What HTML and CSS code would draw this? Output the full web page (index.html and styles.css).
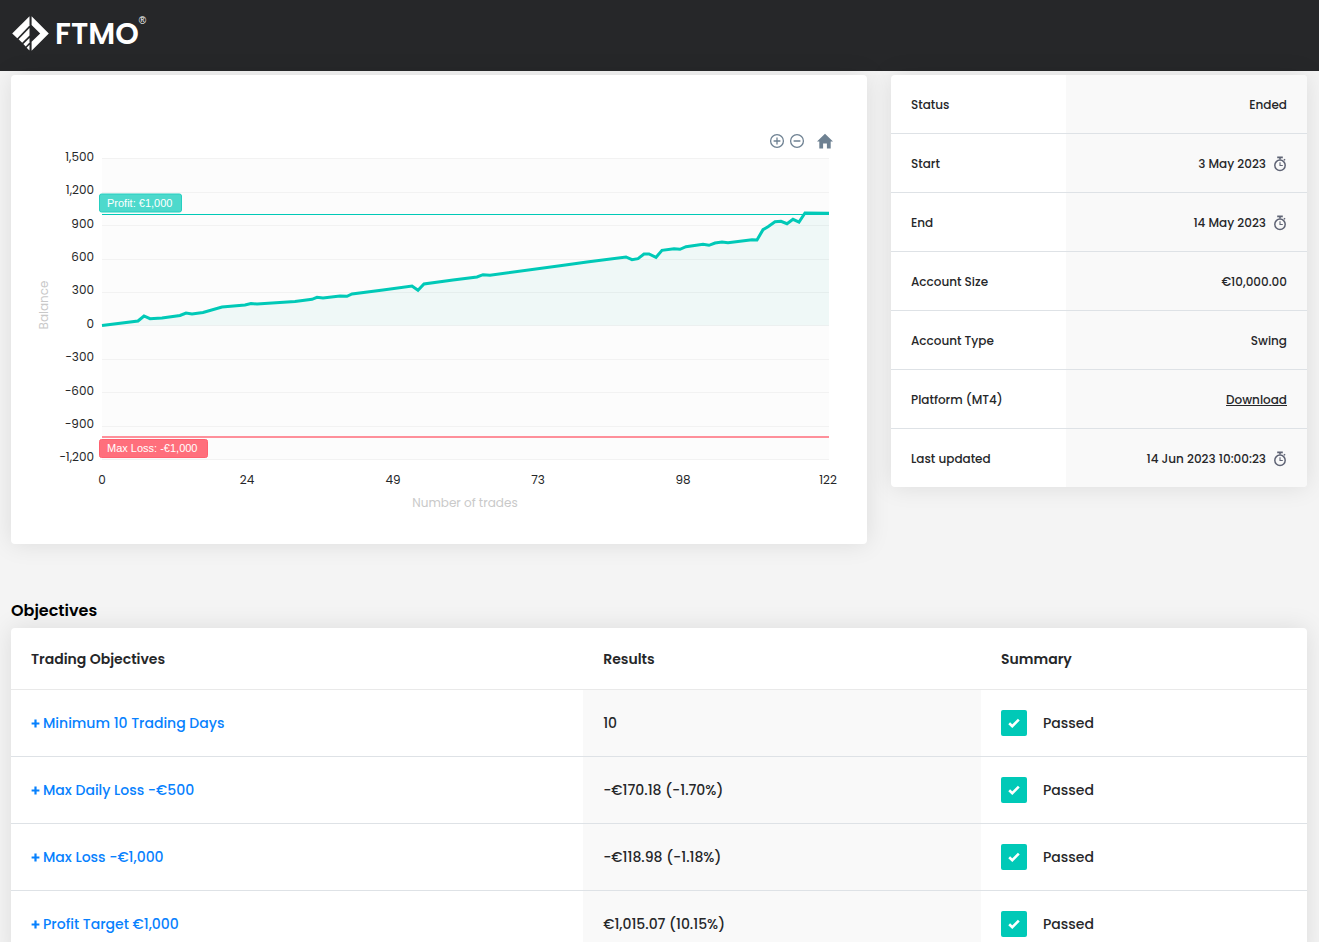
FILE: index.html
```html
<!DOCTYPE html>
<html lang="en">
<head>
<meta charset="utf-8">
<meta name="viewport" content="width=device-width, initial-scale=1">
<title>FTMO – Account overview</title>
<link rel="stylesheet" href="styles.css">
</head>
<body>
<svg class="defs" aria-hidden="true">
  <symbol id="stopwatch" viewBox="0 0 14 16">
    <path d="M4.2 1.4h5.6M7 1.5v2M11 4.3l1-1" fill="none" stroke="currentColor" stroke-width="1.6"/>
    <circle cx="7" cy="9.300" r="5.2" fill="none" stroke="currentColor" stroke-width="1.5"/>
    <path d="M7 6.200V9.500h2.8" fill="none" stroke="currentColor" stroke-width="1.1"/>
  </symbol>
  <symbol id="plus" viewBox="0 0 9 9">
    <path d="M4.5 .6v7.8M.6 4.5h7.8" stroke="currentColor" stroke-width="2.2" fill="none"/>
  </symbol>
  <symbol id="check" viewBox="0 0 12 10">
    <path d="M1.2 5.2L4.3 8.2L10.8 1.7" fill="none" stroke="currentColor" stroke-width="2.6"/>
  </symbol>
</svg>

<header class="topbar">
  <a class="logo" href="#" aria-label="FTMO">
    <svg class="logo-mark" viewBox="0 0 37 36" aria-hidden="true">
      <g fill="#fff">
        <path d="M17.5.2V9.6L5.3 22.2L.2 17.4z"/>
        <path d="M17.5 12V19.5L10.2 26.8L6.6 23.3z"/>
        <path d="M17.5 22V26.4L13.7 30.4L11.4 28.1z"/>
        <path d="M17.5 28.8V34.6L14.6 31.7z"/>
        <path d="M19.6 .2L36.8 17.4L19.6 34.8V25.8L28.2 17.4L19.6 9.100z"/>
      </g>
    </svg>
    <span class="logo-name">FTMO</span><span class="logo-reg">®</span>
  </a>
</header>

<main class="page">
  <div class="overview">
    <section class="card chart-card" aria-label="Balance chart">
      <div class="toolbar">
        <button type="button" class="tool" aria-label="Zoom in">
          <svg viewBox="0 0 16 16"><circle cx="8" cy="8" r="6.4"/><path d="M8 4.6v6.8M4.6 8h6.8"/></svg>
        </button>
        <button type="button" class="tool" aria-label="Zoom out">
          <svg viewBox="0 0 16 16"><circle cx="8" cy="8" r="6.4"/><path d="M4.6 8h6.8"/></svg>
        </button>
        <button type="button" class="tool tool-home" aria-label="Reset zoom">
          <svg viewBox="0 0 16 16"><path d="M8 .8L0 8.4h2.3V15.4h3.8V10.4h3.8v5h3.8V8.4H16L8 .8z"/></svg>
        </button>
      </div>
      <svg class="chart" viewBox="11 151 856 393" role="img" aria-label="Balance by number of trades">
        <rect class="plot" x="102" y="158" width="727" height="302"/>
        <path class="grid" d="M102 158.5H829M102 192.5H829M102 225.5H829M102 259.5H829M102 292.5H829M102 325.5H829M102 359.5H829M102 392.5H829M102 426.5H829M102 459.5H829"/>
        <path class="area" d="M102 325.5L138 321L144 316L150 318.700L162 318L180 315.500L186 313L192 314L203 312.500L222 307L245 305L251 303.500L257 304L295 301.500L312 299.300L317 297.300L323 298L340 296L347 296.300L352 294L383 290L412 286L418 290.300L424 284L453 280L477 277L483 274.700L490 275.300L560 265.700L587 262L626 257L632 259.700L638 258.700L644 254L649 254L656 257.300L662 250.300L674 248.700L680 249.300L686 246.700L703 244.300L709 245.300L715 243L722 242L728 242.700L752 239.700L757 240L763 229.700L768 226.700L775 221.700L781 221.300L787 223.700L793 219.300L799 222L805 213L829 213.300V325.500Z"/>
        <path class="target" d="M102 214.500H829"/>
        <path class="loss" d="M102 437H829"/>
        <path class="line" d="M102 325.500L138 321L144 316L150 318.700L162 318L180 315.500L186 313L192 314L203 312.500L222 307L245 305L251 303.500L257 304L295 301.500L312 299.300L317 297.300L323 298L340 296L347 296.300L352 294L383 290L412 286L418 290.300L424 284L453 280L477 277L483 274.700L490 275.300L560 265.700L587 262L626 257L632 259.700L638 258.700L644 254L649 254L656 257.300L662 250.300L674 248.700L680 249.300L686 246.700L703 244.300L709 245.300L715 243L722 242L728 242.700L752 239.700L757 240L763 229.700L768 226.700L775 221.700L781 221.300L787 223.700L793 219.300L799 222L805 213L829 213.300"/>
        <rect class="flag flag-target" x="99.500" y="194" width="82" height="18" rx="2"/>
        <text class="flag-text" x="107" y="207">Profit: €1,000</text>
        <rect class="flag flag-loss" x="99.500" y="439.500" width="108" height="18" rx="2"/>
        <text class="flag-text" x="107" y="452">Max Loss: -€1,000</text>
        <g class="axis axis-y">
          <text x="94" y="161">1,500</text>
          <text x="94" y="194">1,200</text>
          <text x="94" y="228">900</text>
          <text x="94" y="261">600</text>
          <text x="94" y="294">300</text>
          <text x="94" y="328">0</text>
          <text x="94" y="361">−300</text>
          <text x="94" y="395">−600</text>
          <text x="94" y="428">−900</text>
          <text x="94" y="461">−1,200</text>
        </g>
        <g class="axis axis-x">
          <text x="102" y="484">0</text>
          <text x="247" y="484">24</text>
          <text x="393" y="484">49</text>
          <text x="538" y="484">73</text>
          <text x="683" y="484">98</text>
          <text x="828" y="484">122</text>
        </g>
        <text class="axis-title" x="465" y="507">Number of trades</text>
        <text class="axis-title" transform="translate(48 305) rotate(-90)">Balance</text>
      </svg>
    </section>

    <section class="card info-card" aria-label="Account details">
      <table class="info">
        <tbody>
          <tr><th scope="row">Status</th><td>Ended</td></tr>
          <tr><th scope="row">Start</th><td><span class="stamp">3 May 2023<svg class="clock"><use href="#stopwatch"/></svg></span></td></tr>
          <tr><th scope="row">End</th><td><span class="stamp">14 May 2023<svg class="clock"><use href="#stopwatch"/></svg></span></td></tr>
          <tr><th scope="row">Account Size</th><td>€10,000.00</td></tr>
          <tr><th scope="row">Account Type</th><td>Swing</td></tr>
          <tr><th scope="row">Platform (MT4)</th><td><a class="download" href="#">Download</a></td></tr>
          <tr><th scope="row">Last updated</th><td><span class="stamp">14 Jun 2023 10:00:23<svg class="clock"><use href="#stopwatch"/></svg></span></td></tr>
        </tbody>
      </table>
    </section>
  </div>

  <h2 class="heading">Objectives</h2>
  <section class="card">
    <table class="objectives">
      <thead>
        <tr><th scope="col" class="col-name">Trading Objectives</th><th scope="col" class="col-result">Results</th><th scope="col">Summary</th></tr>
      </thead>
      <tbody>
        <tr>
          <td><a class="objective" href="#"><svg class="plus"><use href="#plus"/></svg>Minimum 10 Trading Days</a></td>
          <td class="result">10</td>
          <td><span class="status"><span class="badge"><svg class="check"><use href="#check"/></svg></span>Passed</span></td>
        </tr>
        <tr>
          <td><a class="objective" href="#"><svg class="plus"><use href="#plus"/></svg>Max Daily Loss −€500</a></td>
          <td class="result">−€170.18 (−1.70%)</td>
          <td><span class="status"><span class="badge"><svg class="check"><use href="#check"/></svg></span>Passed</span></td>
        </tr>
        <tr>
          <td><a class="objective" href="#"><svg class="plus"><use href="#plus"/></svg>Max Loss −€1,000</a></td>
          <td class="result">−€118.98 (−1.18%)</td>
          <td><span class="status"><span class="badge"><svg class="check"><use href="#check"/></svg></span>Passed</span></td>
        </tr>
        <tr>
          <td><a class="objective" href="#"><svg class="plus"><use href="#plus"/></svg>Profit Target €1,000</a></td>
          <td class="result">€1,015.07 (10.15%)</td>
          <td><span class="status"><span class="badge"><svg class="check"><use href="#check"/></svg></span>Passed</span></td>
        </tr>
      </tbody>
    </table>
  </section>
</main>
</body>
</html>
```
FILE: styles.css
```css
* {
  box-sizing: border-box;
}

body {
  margin: 0;
  background: #f4f4f4;
  color: #262729;
  font-family: Poppins, Inter, "Liberation Sans", sans-serif;
  font-size: 14px;
  font-weight: 500;
  line-height: 20px;
}

.defs {
  display: none;
}

.topbar {
  display: flex;
  padding: 16px 12px 19px;
  background: #262729;
}

.logo {
  display: flex;
  align-items: flex-start;
  color: #fff;
  text-decoration: none;
}

.logo-mark {
  width: 37px;
  height: 36px;
}

.logo-name {
  margin-left: 6px;
  font-size: 30px;
  font-weight: 600;
  line-height: 36px;
}

.logo-reg {
  font-family: "Liberation Sans", Arial, sans-serif;
  font-size: 10px;
  font-weight: 400;
  line-height: 10px;
}

.page {
  padding: 4px 12px 24px 11px;
}

.overview {
  display: grid;
  grid-template-columns: repeat(3, 1fr);
  gap: 24px;
  align-items: start;
}

.card {
  overflow: hidden;
  background: #fff;
  border-radius: 4px;
  box-shadow: 0 0 24px rgba(0, 0, 0, 0.1);
}

.chart-card {
  grid-column: span 2;
}

.toolbar {
  display: flex;
  justify-content: flex-end;
  gap: 4px;
  padding: 58px 34px 2px;
}

.tool {
  width: 16px;
  height: 16px;
  padding: 0;
  border: 0;
  background: none;
  cursor: pointer;
}

.tool svg {
  display: block;
  fill: none;
  stroke: #6e8192;
  stroke-width: 1.3;
}

.tool-home {
  margin-left: 8px;
}

.tool-home svg {
  fill: #6e8192;
  stroke: none;
}

.chart {
  display: block;
  width: 100%;
  height: auto;
  overflow: visible;
}

.plot {
  fill: #fcfcfc;
}

.grid {
  fill: none;
  stroke: #f2f2f2;
}

.area {
  fill: #00b39f;
  fill-opacity: 0.05;
}

.line {
  fill: none;
  stroke: #00c9b7;
  stroke-width: 3;
}

.target {
  stroke: #00c9b7;
}

.loss {
  stroke: #ff6b7a;
  stroke-width: 1.5;
}

.flag-target {
  fill: #4dd9cc;
  stroke: #26cfc0;
}

.flag-loss {
  fill: #ff6f7c;
  stroke: #ff6170;
}

.flag-text {
  fill: #fff;
  font-family: "Liberation Sans", Arial, sans-serif;
  font-size: 11px;
  font-weight: 400;
}

.axis {
  fill: #262729;
  font-size: 12px;
  font-weight: 400;
}

.axis-y {
  text-anchor: end;
}

.axis-x {
  text-anchor: middle;
}

.axis-title {
  fill: #c9c9c9;
  font-size: 12px;
  font-weight: 400;
  text-anchor: middle;
}

table {
  width: 100%;
  border-collapse: separate;
  border-spacing: 0;
}

th {
  text-align: left;
}

.info {
  font-size: 12px;
}

.info th,
.info td {
  padding: 20px 20px 18px;
  border-bottom: 1px solid #dee2e6;
}

.info tr:last-child > * {
  border-bottom: 0;
}

.info th {
  width: 42%;
  font-weight: 500;
}

.info td {
  background: #f9f9f9;
  text-align: right;
}

.stamp {
  display: inline-flex;
  align-items: center;
  gap: 7px;
  vertical-align: top;
}

.clock {
  width: 14px;
  height: 16px;
  color: #5f6475;
}

.download {
  color: inherit;
}

.heading {
  margin: 57px 0 7px;
  color: #000;
  font-size: 16px;
  font-weight: 600;
  line-height: 20px;
}

.objectives th {
  padding: 21px 20px 20px;
  border-bottom: 1px solid #e9e9e9;
  font-weight: 600;
}

.objectives .col-name {
  width: 44.15%;
}

.objectives .col-result {
  width: 30.7%;
}

.objectives td {
  padding: 20px;
  border-bottom: 1px solid #dee2e6;
}

.objectives .result {
  background: #f9f9f9;
}

.objective {
  display: flex;
  align-items: center;
  gap: 3px;
  color: #0781fe;
  text-decoration: none;
}

.plus {
  width: 9px;
  height: 9px;
}

.status {
  display: flex;
  align-items: center;
  gap: 16px;
}

.badge {
  display: flex;
  align-items: center;
  justify-content: center;
  width: 26px;
  height: 26px;
  border-radius: 2px;
  background: #00c9b7;
  color: #fff;
}

.check {
  width: 12px;
  height: 10px;
}
```
